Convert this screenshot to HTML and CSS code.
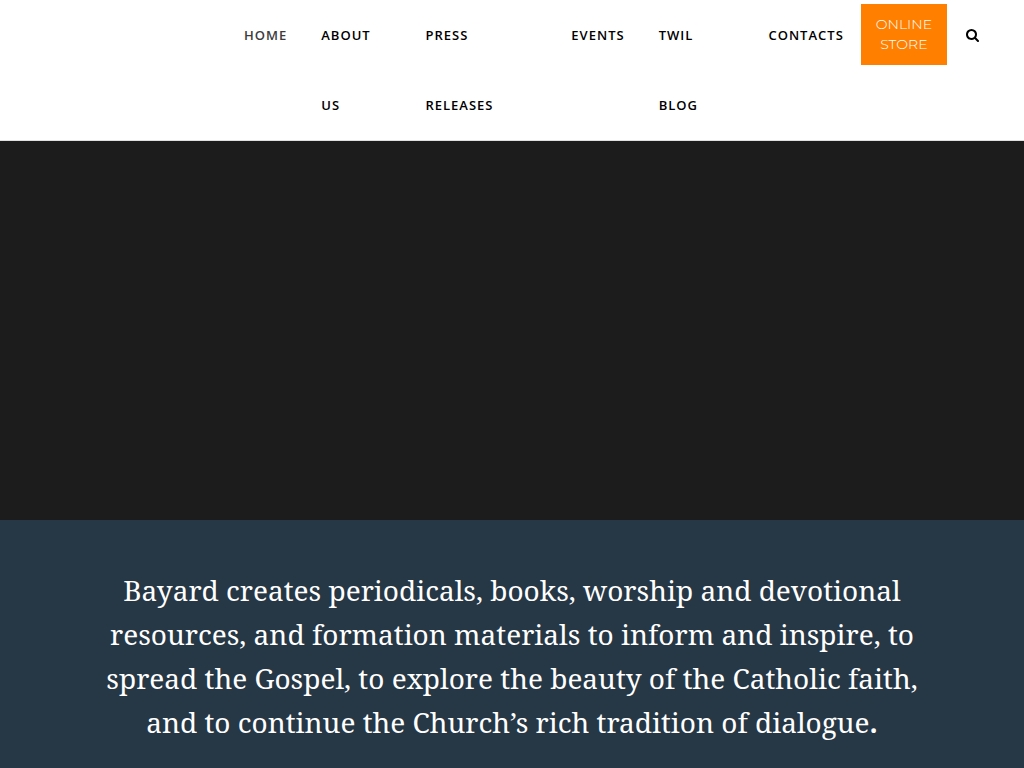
FILE: index.html
```
<!DOCTYPE html>
<html lang="en">
<head>
  <meta charset="UTF-8">
  <meta name="viewport" content="width=device-width, initial-scale=1.0">
  <title>Bayard</title>
  <link rel="stylesheet" href="styles.css">
</head>
<body>
  <header class="site-header">
    <nav class="main-nav" aria-label="Main">
      <ul class="menu">
        <li><a class="active" href="#">Home</a></li>
        <li><a href="#">About Us</a></li>
        <li><a href="#">Press Releases</a></li>
        <li><a href="#">Events</a></li>
        <li><a href="#">TWIL Blog</a></li>
        <li><a href="#">Contacts</a></li>
      </ul>
      <a class="store-button" href="#">Online<br>Store</a>
      <button class="search-button" type="button" aria-label="Search">
        <svg viewBox="0 0 1664 1664" width="13" height="13" aria-hidden="true">
          <path fill="currentColor" d="M1152 704q0-185-131.500-316.500T704 256 387.500 387.500 256 704t131.500 316.500T704 1152t316.500-131.500T1152 704zm512 832q0 52-38 90t-90 38q-54 0-90-38l-343-342q-179 124-399 124-143 0-273.500-55.500t-225-150-150-225T0 704t55.500-273.500 150-225 225-150T704 0t273.500 55.500 225 150 150 225T1408 704q0 220-124 399l343 343q37 37 37 90z"/>
        </svg>
      </button>
    </nav>
  </header>

  <main>
    <section class="hero"></section>

    <section class="mission">
      <p>Bayard creates periodicals, books, worship and devotional resources, and formation materials to inform and inspire, to spread the Gospel, to explore the beauty of the Catholic faith, and to continue the Church’s rich tradition of dialogue<strong>.</strong></p>
    </section>
  </main>
</body>
</html>
```
FILE: styles.css
```
:root {
  --bg: #ffffff;
  --text: #000000;
  --dark: #1c1c1c;
  --navy: #263745;
  --orange: #ff8000;
  --font-sans: 'Open Sans', sans-serif;
  --font-serif: 'Droid Serif', 'Noto Serif', 'Liberation Serif', serif;
}

* {
  box-sizing: border-box;
}

body {
  background-color: var(--bg);
  color: var(--text);
  font-family: var(--font-sans);
  margin: 0;
}

.site-header {
  border-bottom: 1px solid #e0e0e0;
  padding: 0 45px 0 227px;
}

.main-nav {
  display: flex;
  align-items: flex-start;
  justify-content: flex-end;
}

.menu {
  display: flex;
  flex: 0 1 auto;
  min-width: 0;
  list-style: none;
  margin: 0;
  padding: 0;
}

.menu a {
  display: block;
  padding: 0 17px;
  color: var(--text);
  font-size: 13px;
  font-weight: 600;
  line-height: 70px;
  letter-spacing: 1px;
  text-decoration: none;
  text-transform: uppercase;
}

.menu .active {
  color: #3c3c3c;
}

.store-button {
  flex: none;
  margin-top: 4px;
  padding: 10px 15px 11px;
  background: var(--orange);
  color: var(--bg);
  font-family: 'Montserrat', 'Inter', sans-serif;
  font-size: 14px;
  font-weight: 300;
  line-height: 20px;
  text-align: center;
  text-decoration: none;
  text-transform: uppercase;
}

.search-button {
  flex: none;
  display: flex;
  align-items: center;
  height: 70px;
  margin-left: 19px;
  padding: 0;
  border: 0;
  background: none;
  color: var(--text);
  cursor: pointer;
}

.hero {
  height: 379px;
  background: var(--dark);
}

.mission {
  background: var(--navy);
  color: var(--bg);
  padding: 48px 100px;
}

.mission p {
  margin: 0;
  font-family: var(--font-serif);
  font-size: 28px;
  line-height: 44px;
  text-align: center;
}

.mission {
  min-height: 248px;
}
```
